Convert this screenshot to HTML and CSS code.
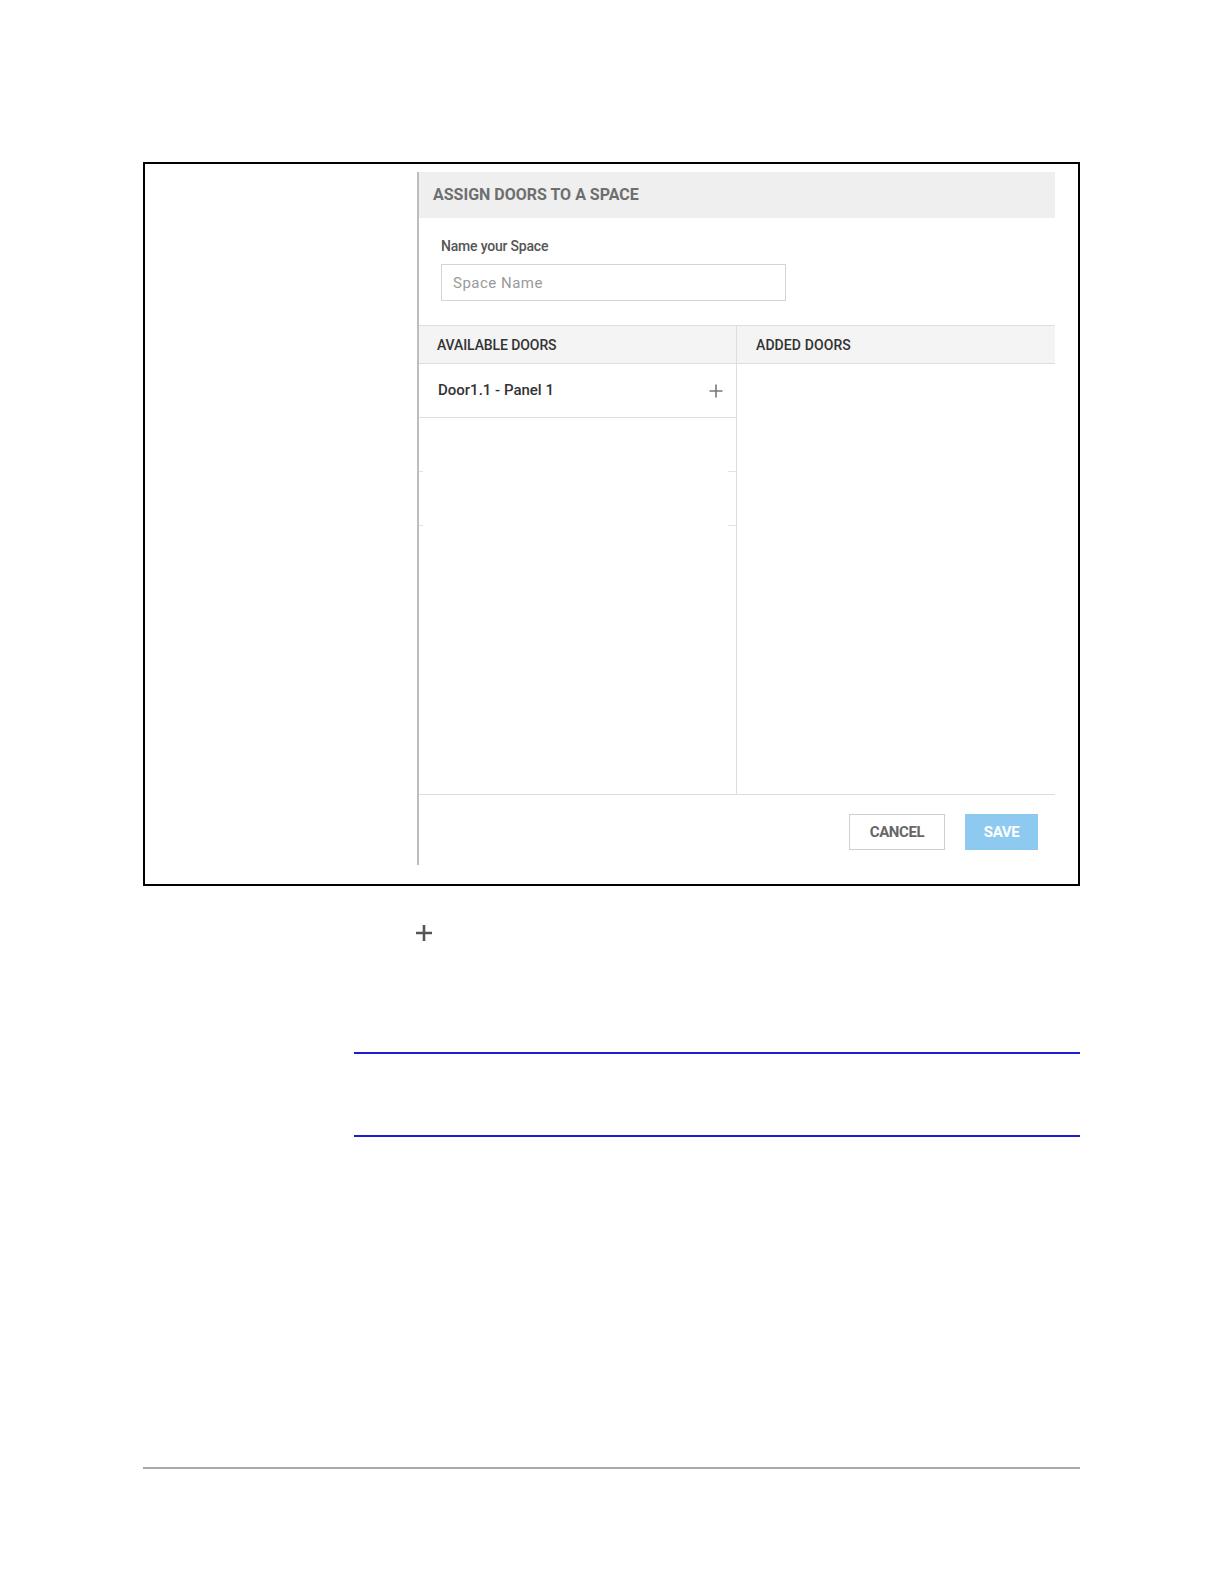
FILE: index.html
```html
<!DOCTYPE html>
<html>
<head>
<meta charset="utf-8">
<link rel="stylesheet" href="styles.css">
</head>
<body>
<div class="page">
  <div class="frame">
    <div class="panel">
      <div class="panel-head">ASSIGN DOORS TO A SPACE</div>
      <div class="form">
        <div class="label">Name your Space</div>
        <div class="input">Space Name</div>
      </div>
      <div class="cols">
        <div class="col col-left">
          <div class="col-head">AVAILABLE DOORS</div>
          <div class="door-row">
            <span class="door-name">Door1.1 - Panel 1</span>
            <svg class="plus" width="14" height="14" viewBox="0 0 14 14"><path d="M7 0.5V13.5M0.5 7H13.5" stroke="#777" stroke-width="1.6" fill="none"/></svg>
          </div>
          <div class="ghost-row"></div>
          <div class="ghost-row"></div>
        </div>
        <div class="col col-right">
          <div class="col-head">ADDED DOORS</div>
        </div>
      </div>
      <div class="panel-foot">
        <div class="btn btn-cancel">CANCEL</div>
        <div class="btn btn-save">SAVE</div>
      </div>
    </div>
  </div>
  <div class="below-plus">
    <svg width="18" height="18" viewBox="0 0 18 18"><path d="M9 1V17M1 9H17" stroke="#555" stroke-width="2.6" fill="none"/></svg>
  </div>
  <div class="blue-rule rule-one"></div>
  <div class="blue-rule rule-two"></div>
  <div class="foot-rule"></div>
</div>
</body>
</html>
```
FILE: styles.css
```css
html, body {
  margin: 0;
  padding: 0;
  background: #fff;
}
body {
  font-family: Roboto, "Liberation Sans", Arial, sans-serif;
}
.page {
  padding-top: 162px;
  width: 1224px;
  height: 1584px;
  box-sizing: border-box;
}
.frame {
  margin-left: 143px;
  width: 937px;
  height: 724px;
  border: 2px solid #000;
  box-sizing: border-box;
  padding: 8px 23px 0 272px;
}
.panel {
  border-left: 2px solid #bdbdbd;
  height: 693px;
  display: flex;
  flex-direction: column;
}
.panel-head {
  height: 46px;
  background: #efefef;
  display: flex;
  align-items: center;
  padding-left: 14px;
  padding-bottom: 2px;
  box-sizing: border-box;
  font-size: 16px;
  font-weight: 700;
  color: #6e6e6e;
  letter-spacing: 0;
  flex: none;
}
.form {
  height: 107px;
  box-sizing: border-box;
  padding: 20px 0 0 22px;
  flex: none;
}
.label {
  font-size: 14px;
  line-height: 16px;
  font-weight: 500;
  color: #555;
  letter-spacing: -0.2px;
}
.input {
  margin-top: 10px;
  width: 345px;
  height: 37px;
  box-sizing: border-box;
  border: 1px solid #d4d4d4;
  padding-left: 11px;
  display: flex;
  align-items: center;
  font-size: 15px;
  letter-spacing: 0.5px;
  color: #9a9a9a;
}
.cols {
  display: grid;
  grid-template-columns: 318px 318px;
  border-top: 1px solid #dedede;
  border-bottom: 1px solid #dedede;
  height: 470px;
  box-sizing: border-box;
  flex: none;
}
.col-left {
  border-right: 1px solid #dedede;
}
.col-head {
  height: 38px;
  box-sizing: border-box;
  border-bottom: 1px solid #dedede;
  background: #f4f4f4;
  display: flex;
  align-items: center;
  padding-left: 18px;
  font-size: 14px;
  font-weight: 500;
  color: #333;
  letter-spacing: -0.1px;
}
.col-right .col-head {
  padding-left: 19px;
  letter-spacing: 0.1px;
}
.door-row {
  height: 54px;
  box-sizing: border-box;
  border-bottom: 1px solid #e0e0e0;
  display: flex;
  align-items: center;
  justify-content: space-between;
  padding: 0 13px 2px 19px;
}
.door-name {
  font-size: 15px;
  font-weight: 500;
  color: #333;
  letter-spacing: 0;
}
.plus {
  display: block;
  margin-top: 3px;
}
.ghost-row {
  height: 54px;
  background:
    linear-gradient(to right, #e3e3e3 0, #e3e3e3 4px, transparent 4px, transparent calc(100% - 8px), #e3e3e3 calc(100% - 8px)) bottom left / 100% 1px no-repeat;
}
.panel-foot {
  display: flex;
  justify-content: flex-end;
  gap: 20px;
  padding: 19px 17px 0 0;
}
.btn {
  height: 36px;
  box-sizing: border-box;
  display: flex;
  align-items: center;
  justify-content: center;
  font-size: 15px;
  font-weight: 700;
  letter-spacing: -0.4px;
}
.btn-cancel {
  width: 96px;
  border: 1px solid #cfcfcf;
  color: #666;
}
.btn-save {
  width: 73px;
  background: #8ec9ef;
  color: #fff;
}
.below-plus {
  margin: 38px 0 0 415px;
  width: 18px;
  height: 18px;
}
.below-plus svg {
  display: block;
}
.blue-rule {
  margin-left: 354px;
  width: 726px;
  height: 2px;
  background: #1c1cd6;
}
.rule-one {
  margin-top: 110px;
}
.rule-two {
  margin-top: 81px;
}
.foot-rule {
  margin: 330px 0 0 143px;
  width: 937px;
  height: 2px;
  background: #aaa;
}
```
